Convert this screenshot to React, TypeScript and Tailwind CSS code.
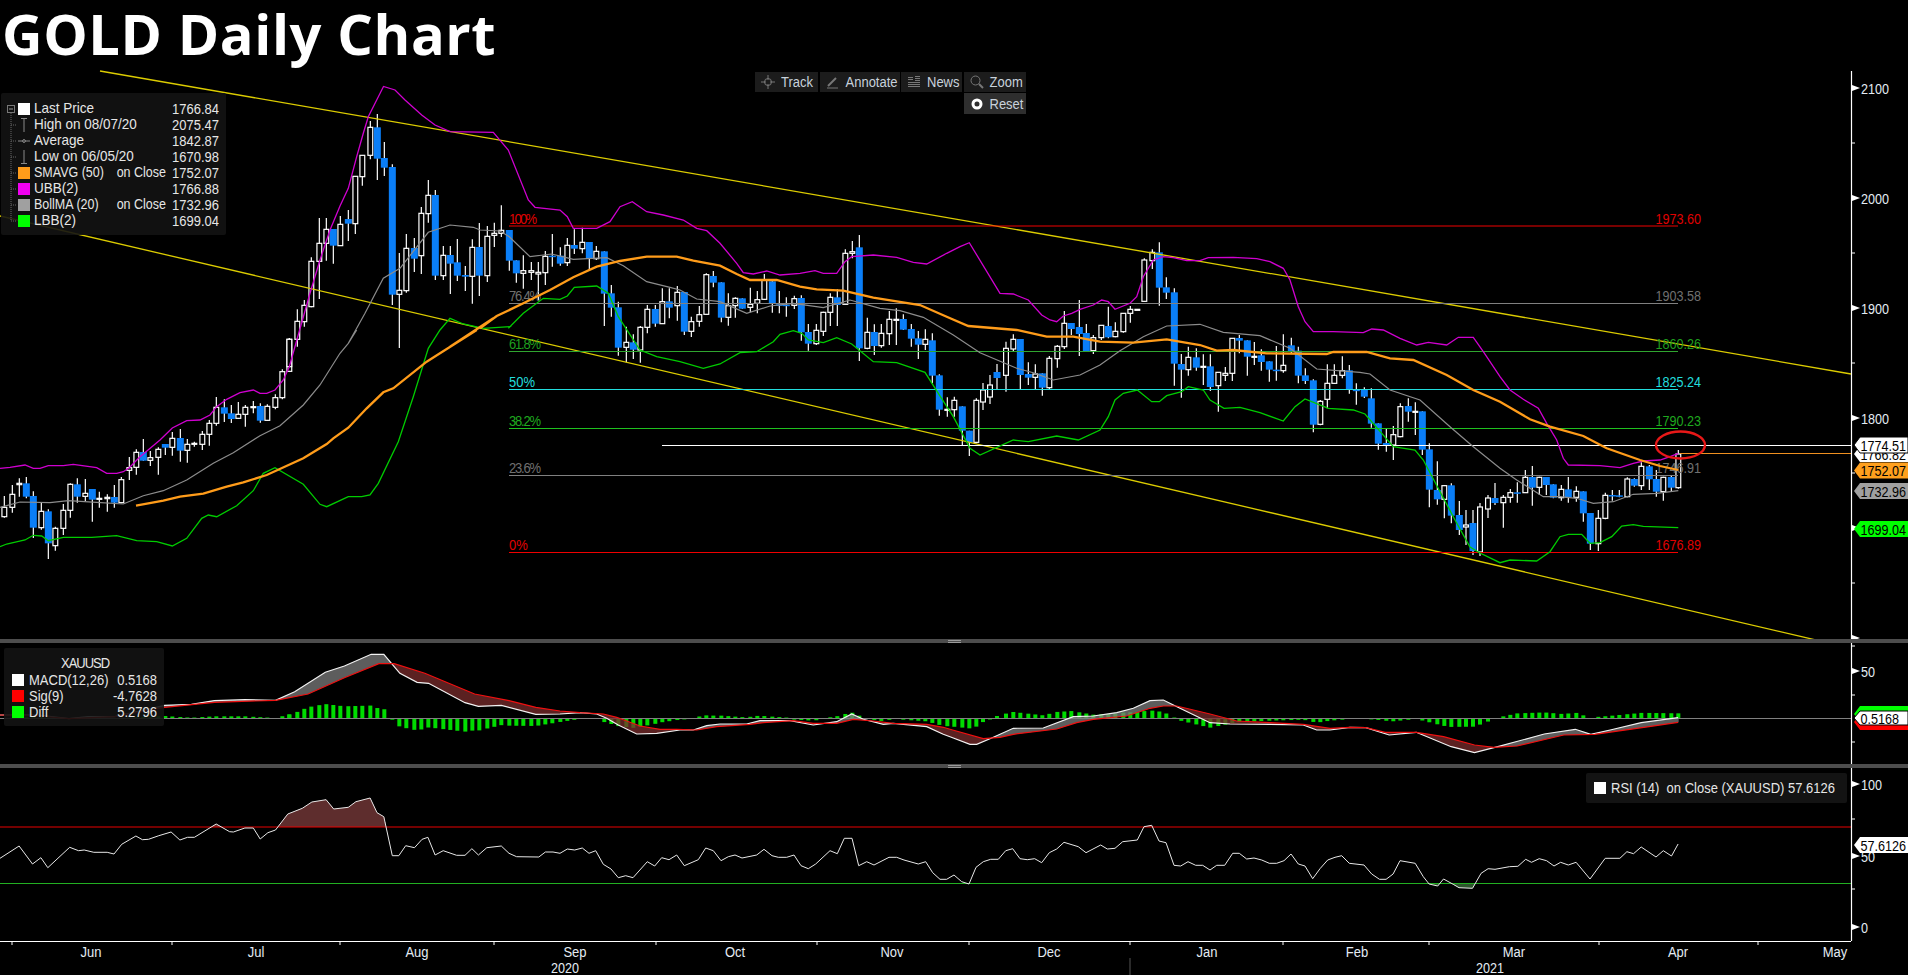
import type { ReactNode } from "react";

type Pt = [number, number];
// x, bodyTop, bodyBottom, wickTop, wickBottom, up (1) or down (0), in crop units
type Bar = [number, number, number, number, number, number];

// The price data was read off crops of the chart, so each block has its own offset and scale.
const pts = (ox: number, oy: number, list: Pt[], sx = 3, sy = 3): Pt[] =>
  list.map(([x, y]) => [ox + x / sx, oy + y / sy]);
const bars = (ox: number, oy: number, list: Bar[]): Bar[] =>
  list.map(([x, t, b, wt, wb, up]) => [ox + x / 3, oy + t / 3, oy + b / 3, oy + wt / 3, oy + wb / 3, up]);

const candles: Bar[] = [
  ...bars(0, 330, [
    [13, 532, 560, 498, 563, 1], [37, 493, 532, 465, 548, 1], [58, 460, 464, 445, 500, 1], [79, 460, 500, 441, 505, 0],
    [100, 498, 593, 484, 624, 0], [124, 544, 593, 519, 599, 1], [145, 544, 640, 538, 687, 0], [166, 595, 647, 590, 662, 1],
    [190, 541, 595, 522, 615, 1], [211, 463, 541, 460, 563, 1], [232, 463, 500, 445, 518, 0], [256, 490, 499, 447, 514, 1],
    [277, 477, 509, 477, 575, 0], [298, 505, 508, 485, 533, 1], [322, 502, 506, 493, 545, 1], [343, 501, 518, 465, 533, 0],
    [364, 449, 518, 441, 520, 1], [388, 413, 421, 381, 450, 1], [409, 367, 412, 358, 434, 1], [430, 366, 392, 327, 392, 0],
    [451, 383, 391, 363, 408, 1], [475, 358, 382, 352, 434, 1], [496, 342, 353, 342, 375, 0], [517, 325, 352, 306, 377, 1],
    [541, 324, 362, 297, 395, 0], [562, 343, 361, 327, 398, 1], [583, 340, 343, 335, 350, 1], [607, 313, 343, 303, 360, 1],
    [628, 280, 313, 270, 347, 1], [649, 232, 280, 201, 287, 1], [673, 232, 251, 208, 276, 0], [694, 250, 267, 225, 279, 0],
    [715, 253, 265, 216, 267, 1], [736, 232, 253, 225, 290, 1], [760, 230, 232, 213, 250, 1], [781, 228, 272, 220, 278, 0],
    [802, 229, 271, 223, 272, 1], [826, 203, 232, 193, 238, 1], [847, 125, 203, 118, 208, 1], [868, 28, 124, 25, 124, 1],
  ]),
  ...bars(250, 100, [
    [118, 718, 800, 714, 800, 1], [142, 664, 718, 628, 740, 1], [163, 616, 665, 600, 680, 1], [184, 484, 620, 472, 622, 1],
    [208, 430, 484, 354, 597, 1], [229, 388, 430, 354, 482, 1], [250, 387, 437, 387, 491, 0], [271, 373, 437, 348, 437, 1],
    [295, 357, 371, 330, 423, 0], [316, 229, 371, 229, 402, 1], [337, 166, 230, 166, 257, 1], [361, 82, 166, 63, 178, 1],
    [382, 82, 176, 42, 240, 0], [403, 174, 203, 126, 228, 0], [427, 201, 584, 193, 615, 0], [448, 571, 583, 459, 744, 1],
    [469, 445, 572, 402, 578, 1], [493, 444, 476, 414, 516, 0], [514, 340, 467, 321, 522, 1], [535, 286, 341, 240, 368, 1],
    [556, 285, 527, 270, 540, 0], [580, 466, 527, 438, 540, 1], [601, 465, 491, 438, 582, 0], [622, 487, 527, 417, 543, 0],
    [646, 525, 530, 498, 573, 0], [667, 442, 529, 418, 611, 1], [688, 441, 527, 369, 588, 0], [712, 409, 527, 378, 546, 1],
    [733, 400, 406, 368, 441, 1], [754, 391, 400, 316, 411, 1],
  ]),
  ...bars(480, 200, [
    [88, 90, 182, 90, 212, 0], [109, 181, 220, 181, 248, 0], [130, 212, 220, 166, 266, 1], [154, 212, 217, 186, 240, 1],
    [175, 217, 222, 186, 300, 1], [196, 169, 218, 153, 255, 1], [217, 167, 170, 102, 200, 0], [241, 167, 191, 142, 197, 0],
    [262, 136, 188, 114, 198, 1], [283, 135, 146, 88, 162, 0], [307, 127, 146, 83, 160, 1], [328, 126, 176, 126, 212, 0],
    [349, 154, 176, 138, 180, 1], [373, 154, 281, 154, 378, 0], [394, 280, 323, 255, 350, 0], [415, 322, 443, 305, 467, 0],
    [439, 427, 442, 380, 487, 1], [460, 427, 449, 403, 477, 0], [481, 382, 450, 378, 488, 1], [502, 328, 382, 315, 400, 1],
    [526, 327, 371, 315, 380, 0], [547, 305, 371, 265, 372, 1], [568, 304, 323, 265, 355, 0], [592, 277, 317, 258, 362, 1],
    [613, 276, 395, 276, 405, 0], [634, 365, 394, 350, 411, 1], [658, 344, 364, 318, 380, 1], [679, 224, 343, 220, 344, 1],
    [700, 228, 248, 213, 262, 0], [724, 247, 353, 247, 367, 0], [745, 317, 352, 280, 377, 1], [766, 295, 317, 292, 353, 1],
    [787, 295, 326, 295, 326, 0], [811, 313, 322, 263, 337, 1], [832, 299, 310, 273, 340, 1], [853, 240, 298, 222, 300, 1],
    [877, 244, 310, 238, 338, 0], [898, 313, 316, 273, 340, 0], [919, 314, 317, 292, 350, 0], [943, 296, 316, 287, 327, 1],
    [964, 294, 397, 286, 422, 0], [985, 396, 431, 372, 452, 0], [1009, 391, 431, 372, 435, 1], [1030, 337, 394, 335, 408, 1],
    [1051, 292, 337, 280, 378, 1], [1072, 292, 315, 268, 378, 0], [1096, 160, 313, 148, 313, 1], [1117, 155, 160, 123, 175, 1],
    [1138, 142, 445, 105, 483, 0], [1162, 397, 445, 353, 448, 1], [1183, 396, 438, 373, 465, 0], [1204, 400, 437, 372, 443, 1],
    [1228, 358, 401, 333, 435, 1], [1249, 358, 361, 325, 435, 1], [1270, 357, 389, 343, 390, 0], [1294, 387, 416, 372, 440, 0],
    [1315, 415, 434, 393, 477, 0], [1336, 418, 433, 388, 450, 1], [1357, 421, 527, 400, 550, 0], [1378, 526, 629, 523, 647, 0],
    [1402, 628, 630, 592, 650, 1], [1423, 601, 629, 590, 650, 1], [1447, 619, 692, 619, 735, 0], [1468, 692, 727, 692, 768, 0],
    [1489, 601, 727, 595, 730, 1],
  ]),
  [983, 390, 402, 383, 410, 1], [990, 385, 397, 375, 404, 1], [997, 372, 378, 364, 390, 0],
  ...bars(1000, 220, [
    [18, 385, 466, 365, 515, 1], [40, 358, 387, 343, 395, 1], [61, 357, 465, 357, 507, 0], [85, 462, 473, 427, 495, 0],
    [106, 462, 472, 433, 507, 1], [127, 460, 503, 460, 527, 0], [148, 415, 503, 408, 507, 1], [172, 379, 416, 375, 443, 1],
    [193, 310, 380, 273, 387, 1], [214, 309, 327, 309, 345, 0], [238, 321, 342, 240, 408, 0], [259, 339, 393, 312, 393, 0],
    [280, 353, 392, 345, 402, 1], [304, 316, 353, 316, 360, 1], [325, 318, 352, 260, 355, 0], [346, 334, 350, 307, 352, 1],
    [370, 280, 335, 280, 338, 1], [391, 268, 280, 258, 308, 1], [412, 268, 269, 268, 269, 1], [433, 120, 244, 115, 245, 1],
    [457, 97, 122, 88, 147, 1], [478, 97, 203, 67, 257, 0], [499, 202, 218, 172, 237, 0], [523, 217, 431, 205, 497, 0],
    [544, 432, 449, 402, 533, 0], [565, 412, 449, 380, 467, 1], [589, 412, 443, 385, 452, 0], [610, 439, 442, 403, 495, 1],
    [631, 439, 501, 403, 513, 0], [655, 457, 497, 457, 575, 1], [676, 460, 466, 441, 483, 1], [697, 355, 460, 355, 483, 1],
    [718, 354, 362, 345, 400, 0], [742, 361, 410, 361, 467, 0], [763, 409, 412, 366, 435, 1], [784, 406, 426, 388, 452, 0],
    [808, 424, 449, 424, 485, 0], [829, 449, 452, 378, 482, 0], [850, 436, 452, 343, 458, 1], [874, 376, 394, 353, 400, 0],
    [895, 392, 467, 380, 490, 0], [916, 466, 483, 445, 492, 0], [940, 481, 614, 478, 637, 0], [961, 544, 613, 540, 616, 1],
    [982, 490, 538, 433, 565, 1], [1003, 466, 490, 433, 492, 1], [1027, 452, 466, 409, 475, 1], [1048, 451, 507, 435, 521, 0],
    [1069, 509, 512, 490, 554, 0], [1093, 509, 530, 502, 534, 0], [1114, 535, 611, 505, 623, 0], [1135, 610, 671, 610, 689, 0],
    [1159, 669, 675, 627, 695, 0], [1180, 644, 675, 618, 720, 1], [1201, 560, 650, 550, 652, 1], [1225, 558, 575, 535, 605, 0],
    [1246, 574, 576, 547, 645, 1], [1267, 574, 689, 574, 705, 0], [1288, 688, 809, 670, 862, 0], [1312, 810, 838, 724, 854, 0],
    [1333, 797, 838, 795, 895, 1], [1354, 796, 887, 790, 910, 0], [1378, 885, 930, 843, 945, 0],
  ]),
  [1466, 525, 527, 510, 545, 1], [1473, 523, 551, 510, 555, 0], [1480, 507, 552, 503, 556, 1], [1488, 498, 509, 495, 518, 1], [1495, 498, 503, 483, 505, 0],
  ...bars(1500, 380, [
    [10, 352, 368, 345, 443, 1], [31, 338, 352, 327, 368, 1], [52, 337, 339, 307, 368, 0], [76, 292, 338, 270, 338, 1],
    [97, 291, 323, 258, 377, 0], [118, 292, 322, 290, 345, 1], [139, 291, 315, 291, 345, 0], [160, 313, 353, 313, 355, 0],
    [184, 328, 353, 315, 362, 1], [205, 328, 353, 291, 368, 0], [229, 334, 352, 319, 365, 1], [250, 334, 400, 334, 425, 0],
    [271, 399, 491, 399, 510, 0], [295, 415, 491, 390, 513, 1], [316, 346, 415, 338, 418, 1], [337, 345, 347, 330, 362, 0],
    [358, 346, 348, 330, 352, 0], [382, 297, 350, 292, 352, 1], [403, 297, 317, 295, 320, 0], [424, 259, 317, 247, 330, 1],
    [448, 259, 298, 255, 330, 0], [469, 297, 335, 270, 350, 0], [490, 292, 335, 290, 362, 1], [514, 291, 323, 288, 333, 0],
    [535, 222, 323, 210, 326, 1],
  ]),
];

const ubb: Pt[] = [
  ...pts(0, 330, [[0, 415], [30, 412], [75, 405], [100, 415], [120, 415], [145, 407], [190, 407], [220, 403], [290, 413], [320, 430], [350, 430], [370, 425], [388, 413], [420, 380], [480, 330], [517, 294], [560, 272], [600, 270], [630, 255], [650, 230], [680, 208], [720, 188], [760, 180], [780, 190], [800, 190], [825, 180], [850, 150], [868, 110]]),
  ...pts(250, 100, [[180, 580], [210, 480], [240, 390], [270, 318], [295, 265], [320, 170], [340, 100], [355, 50], [380, 0]]),
  [383.5, 86.5], [395, 90], [405, 100],
  ...pts(250, 100, [[515, 45], [555, 75], [600, 95], [730, 97], [775, 150]]),
  ...pts(480, 200, [[145, 0], [165, 22], [240, 30], [262, 50], [280, 85], [350, 85], [390, 65], [420, 20], [457, 5], [500, 35], [550, 45], [610, 60], [650, 85], [680, 92], [720, 130], [770, 190], [790, 218], [820, 222], [860, 213], [900, 225], [960, 220], [1005, 212], [1030, 220], [1070, 220], [1095, 185], [1115, 170], [1180, 165], [1250, 172], [1300, 187], [1340, 192], [1400, 160], [1440, 140], [1468, 128]]),
  ...pts(1000, 220, [[0, 220], [40, 222], [85, 240], [125, 285], [150, 300], [170, 305], [190, 288], [215, 280], [240, 268], [280, 255], [305, 240], [325, 245], [345, 268], [390, 250], [410, 230], [430, 170], [460, 120], [490, 110], [520, 113], [560, 122], [600, 122], [625, 113], [700, 112], [770, 116], [810, 125], [850, 145], [870, 180], [895, 260], [915, 305], [940, 335], [1000, 335], [1090, 338], [1115, 327], [1150, 330], [1200, 355], [1250, 375], [1285, 367], [1340, 375], [1375, 352], [1420, 352], [1450, 395], [1500, 470]]),
  ...pts(1500, 380, [[30, 30], [70, 58], [115, 85], [140, 130], [170, 180], [190, 235], [205, 255], [300, 257], [360, 263], [400, 250], [430, 243], [480, 240], [510, 230], [535, 220]]),
];

const sma: Pt[] = [
  ...pts(0, 330, [[408, 527], [490, 512], [540, 500], [610, 491], [680, 470], [730, 457], [800, 435], [910, 385], [980, 342], [1000, 325], [1045, 293], [1100, 235], [1150, 187], [1180, 175], [1280, 95], [1320, 70], [1430, 0]]),
  ...pts(250, 100, [[600, 740], [730, 655]]),
  ...pts(480, 200, [[0, 385], [50, 348], [130, 310], [210, 270], [280, 232], [350, 200], [420, 183], [500, 170], [590, 170], [640, 182], [720, 197], [770, 222], [810, 240], [890, 240], [960, 260], [1010, 268], [1090, 272], [1180, 293], [1320, 315], [1400, 350], [1465, 378]]),
  ...pts(1000, 220, [[50, 330], [140, 350], [220, 350], [300, 365], [400, 368], [500, 358], [600, 375], [650, 392], [700, 390], [800, 400], [980, 402], [1000, 396], [1100, 396], [1170, 415], [1240, 420], [1340, 465], [1420, 510], [1500, 545]]),
  ...pts(1500, 380, [[90, 118], [150, 140], [250, 168], [320, 205], [420, 240], [480, 258], [535, 270]]),
];

const bollMa: Pt[] = [
  ...pts(0, 330, [[0, 532], [60, 516], [150, 518], [205, 512], [290, 517], [370, 522], [430, 497], [490, 482], [560, 450], [640, 400], [700, 368], [780, 317], [840, 287], [910, 225], [960, 165], [1020, 70], [1045, 40], [1070, 0]]),
  ...pts(250, 100, [[295, 730], [345, 640], [400, 535], [450, 505], [535, 397], [600, 375], [670, 382], [690, 390], [750, 393]]),
  ...pts(480, 200, [[88, 110], [150, 170], [215, 162], [280, 178], [380, 173], [430, 197], [500, 245], [570, 262], [600, 270], [650, 297], [720, 305], [800, 340], [870, 318], [940, 310], [1030, 323], [1110, 300], [1200, 325], [1260, 332], [1330, 352], [1420, 405], [1500, 458]]),
  ...pts(1000, 220, [[50, 445], [100, 458], [160, 480], [240, 465], [300, 435], [360, 392], [430, 350], [500, 318], [600, 313], [670, 337], [780, 347], [870, 385], [950, 447], [1080, 457], [1110, 462], [1170, 510], [1260, 540], [1350, 620], [1420, 680], [1500, 745]]),
  ...pts(1500, 380, [[50, 300], [130, 350], [180, 350], [230, 355], [280, 370], [340, 365], [400, 343], [470, 340], [535, 332]]),
];

const lbb: Pt[] = [
  ...pts(0, 330, [[0, 650], [20, 642], [75, 630], [100, 616], [125, 618], [145, 632], [190, 622], [275, 622], [350, 617], [410, 632], [470, 635], [517, 648], [560, 625], [605, 565], [625, 555], [650, 560], [710, 527], [760, 482], [790, 430], [825, 413], [910, 463], [960, 523], [980, 530], [1045, 500], [1085, 500], [1110, 495], [1135, 460], [1195, 335], [1240, 200], [1285, 55], [1320, 0]]),
  ...pts(250, 100, [[600, 655], [640, 672], [700, 685], [780, 680]]),
  ...pts(480, 200, [[85, 385], [130, 340], [190, 295], [240, 298], [262, 288], [283, 262], [350, 258], [385, 280], [415, 350], [480, 450], [530, 470], [600, 485], [670, 505], [720, 492], [780, 458], [830, 455], [880, 425], [900, 403], [940, 392], [965, 400], [985, 420], [1030, 428], [1070, 413], [1115, 432], [1180, 485], [1250, 488], [1335, 517], [1375, 580], [1420, 650], [1470, 745], [1500, 765]]),
  ...pts(1000, 220, [[40, 660], [85, 665], [170, 648], [235, 660], [300, 630], [325, 590], [345, 540], [370, 520], [412, 510], [455, 545], [478, 545], [500, 527], [545, 515], [565, 500], [610, 510], [630, 540], [672, 565], [720, 562], [780, 578], [850, 603], [885, 560], [915, 537], [985, 565], [1060, 570], [1095, 582], [1180, 680], [1245, 690], [1270, 720], [1365, 900]]),
  [1470, 547], [1480, 553],
  ...pts(1500, 380, [[0, 548], [30, 540], [110, 543], [150, 515], [180, 470], [205, 463], [245, 463], [270, 490], [300, 488], [335, 470], [365, 438], [400, 434], [430, 439], [535, 443]]),
];

const macd: Pt[] = [
  ...pts(0, 620, [[0, 285], [100, 285], [180, 296], [230, 290], [300, 290], [430, 256], [500, 253], [560, 242], [640, 239], [720, 241], [770, 215], [850, 157], [900, 138], [970, 103], [1003, 103], [1045, 160], [1090, 187], [1120, 190], [1215, 248], [1250, 259], [1310, 256], [1400, 283]], 2.613),
  ...pts(560, 640, [[0, 222], [60, 218], [110, 222], [140, 235], [175, 255], [230, 282], [290, 280], [360, 270], [400, 270], [440, 257], [480, 252], [560, 252], [600, 242], [690, 242], [760, 255], [830, 245], [875, 222], [910, 238], [970, 253], [1000, 250], [1100, 260], [1150, 283]]),
  ...pts(950, 640, [[0, 290], [60, 313], [80, 313], [120, 296], [190, 265], [280, 264], [370, 230], [430, 228], [500, 218], [550, 205], [600, 182], [640, 180], [690, 205], [780, 248], [840, 252], [960, 253], [1060, 255], [1100, 270], [1140, 270], [1200, 262]]),
  ...pts(1300, 620, [[170, 323], [230, 345], [300, 337], [390, 380], [450, 398], [510, 380], [630, 342], [710, 328], [750, 343], [800, 330], [880, 308], [975, 293]], 2.579),
];

const signal: Pt[] = [
  ...pts(0, 620, [[0, 285], [100, 288], [180, 296], [300, 290], [430, 262], [560, 247], [720, 241], [805, 222], [900, 173], [990, 131], [1030, 131], [1110, 160], [1240, 222], [1330, 242], [1400, 262]], 2.613),
  ...pts(560, 640, [[0, 213], [60, 218], [130, 222], [170, 232], [240, 258], [300, 268], [350, 268], [410, 270], [470, 260], [570, 253], [610, 248], [700, 242], [760, 250], [830, 250], [880, 238], [940, 243], [1000, 250], [1100, 253], [1150, 262]]),
  ...pts(950, 640, [[0, 268], [100, 296], [150, 292], [190, 283], [320, 267], [380, 248], [430, 238], [530, 228], [600, 205], [640, 198], [680, 198], [780, 222], [860, 243], [960, 248], [1060, 253], [1140, 265], [1200, 262]]),
  ...pts(1300, 620, [[170, 323], [220, 337], [300, 337], [370, 350], [450, 375], [500, 382], [560, 378], [680, 345], [760, 343], [900, 320], [975, 307]], 2.579),
];

const rsi: Pt[] = [
  ...pts(0, 620, [[0, 715], [50, 678], [85, 732], [107, 713], [125, 743], [182, 682], [205, 692], [220, 690], [245, 697], [280, 697], [298, 702], [318, 673], [355, 648], [372, 659], [388, 658], [415, 647], [447, 636], [470, 660], [490, 652], [508, 652], [565, 612], [600, 635], [610, 636], [640, 624], [662, 624], [680, 657], [700, 638], [720, 630], [752, 582], [790, 565], [815, 546], [852, 539], [872, 567], [910, 562], [930, 545], [967, 534], [985, 578], [1003, 590], [1025, 707], [1042, 707], [1060, 677], [1083, 683], [1103, 658], [1118, 652], [1137, 705], [1158, 692], [1193, 706], [1215, 706], [1233, 686], [1250, 705], [1272, 683], [1310, 678], [1330, 700], [1350, 710], [1408, 711], [1425, 696], [1445, 696]], 2.613),
  ...pts(560, 640, [[0, 640], [22, 627], [44, 630], [67, 624], [87, 640], [107, 632], [130, 673], [153, 687], [175, 713], [197, 707], [219, 713], [262, 665], [284, 678], [305, 653], [327, 659], [350, 645], [373, 677], [415, 659], [437, 624], [460, 632], [483, 662], [505, 650], [525, 645], [546, 654], [590, 645], [612, 628], [636, 647], [655, 652], [680, 652], [702, 645], [723, 677], [745, 686], [767, 672], [810, 632], [832, 641], [853, 595], [876, 595], [896, 677], [920, 665], [942, 675], [987, 652], [1010, 652], [1032, 660], [1075, 672], [1097, 665], [1118, 698], [1140, 718], [1160, 718]]),
  ...pts(950, 640, [[0, 712], [12, 705], [35, 725], [57, 732], [78, 682], [100, 665], [122, 658], [145, 658], [167, 632], [188, 626], [210, 656], [232, 659], [254, 656], [275, 668], [298, 638], [320, 627], [342, 607], [385, 620], [408, 638], [452, 615], [472, 627], [495, 625], [518, 605], [562, 600], [582, 560], [605, 556], [627, 603], [648, 608], [672, 676], [692, 678], [714, 665], [737, 676], [758, 676], [780, 690], [800, 676], [824, 676], [848, 640], [868, 640], [890, 657], [912, 654], [935, 660], [958, 670], [980, 670], [1002, 662], [1023, 642], [1045, 672], [1065, 678], [1088, 716], [1110, 686], [1133, 660], [1155, 652], [1175, 647], [1198, 670]]),
  ...pts(1300, 620, [[165, 735], [185, 762], [205, 778], [222, 778], [240, 762], [258, 722], [297, 730], [318, 770], [333, 792], [355, 798], [370, 777], [395, 793], [410, 803], [445, 805], [467, 760], [485, 746], [503, 748], [540, 740], [562, 739], [582, 718], [597, 727], [617, 716], [636, 722], [655, 738], [672, 727], [692, 735], [712, 727], [748, 777], [787, 715], [825, 715], [843, 695], [860, 701], [880, 681], [918, 711], [937, 692], [958, 708], [975, 672]], 2.579),
];

const fibLevels = [
  { pct: "100%", value: "1973.60", y: 226, line: "#f00000", text: "#e00000" },
  { pct: "76.4%", value: "1903.58", y: 303.5, line: "#808080", text: "#707070" },
  { pct: "61.8%", value: "1860.26", y: 351.5, line: "#2fa52f", text: "#1f9f1f" },
  { pct: "50%", value: "1825.24", y: 389.5, line: "#22dddd", text: "#22dddd" },
  { pct: "38.2%", value: "1790.23", y: 428.5, line: "#1fc01f", text: "#1fa81f" },
  { pct: "23.6%", value: "1746.91", y: 475.5, line: "#808080", text: "#707070" },
  { pct: "0%", value: "1676.89", y: 552.5, line: "#f00000", text: "#e00000" },
];

const months: [string, number][] = [
  ["Jun", 91], ["Jul", 256], ["Aug", 417], ["Sep", 575], ["Oct", 735], ["Nov", 892],
  ["Dec", 1049], ["Jan", 1207], ["Feb", 1357], ["Mar", 1514], ["Apr", 1678], ["May", 1835],
];
const timeTicks = [12, 172, 340, 494, 656, 817, 969, 1130, 1283, 1429, 1599, 1758];

// Bloomberg's chart font is taller and narrower than anything installed
const tallSvg = "origin-center scale-y-[1.14] [transform-box:fill-box]";
const tallHtml = "inline-block scale-y-[1.12]";

const line = (list: Pt[]) => list.map(([x, y]) => `${x.toFixed(1)},${y.toFixed(1)}`).join(" ");

function at(list: Pt[], x: number) {
  if (x <= list[0][0]) return list[0][1];
  for (let i = 1; i < list.length; i++) {
    if (x <= list[i][0]) {
      const [x0, y0] = list[i - 1];
      const [x1, y1] = list[i];
      return y0 + ((y1 - y0) * (x - x0)) / (x1 - x0 || 1);
    }
  }
  return list[list.length - 1][1];
}

// one path of 1px columns between two curves, used for the shaded cloud areas
function columns(from: number, to: number, top: (x: number) => number, bottom: (x: number) => number) {
  let d = "";
  for (let x = from; x <= to; x++) {
    const a = top(x);
    const b = bottom(x);
    if (b > a) d += `M${x} ${a.toFixed(1)}V${b.toFixed(1)}`;
  }
  return d;
}

function Flag({ y, label, fill, h = 8, stroke }: { y: number; label?: string; fill: string; h?: number; stroke?: string }) {
  return (
    <g>
      <polygon points={`1854,${y} 1860,${y - h} 1908,${y - h} 1908,${y + h} 1860,${y + h}`} fill={fill} stroke={stroke} />
      {label && (
        <text x={1860.5} y={y + 5} fill="#000" fontSize={12.6} className={tallSvg}>
          {label}
        </text>
      )}
    </g>
  );
}

function Axis({ y1, y2, major, minor, labels }: { y1: number; y2: number; major: number[]; minor: number[]; labels: [string, number][] }) {
  return (
    <g>
      <line x1={1851.5} x2={1851.5} y1={y1} y2={y2} stroke="#fff" strokeWidth={1.2} />
      {major.map((y) => (
        <polygon key={y} points={`1852,${y - 3} 1860,${y} 1852,${y + 3}`} fill="#fff" />
      ))}
      {minor.map((y) => (
        <line key={y} x1={1852} x2={1855} y1={y} y2={y} stroke="#fff" />
      ))}
      {labels.map(([t, y]) => (
        <text key={t} x={1861} y={y + 5} fill="#e4ecf4" fontSize={12.6} className={tallSvg}>
          {t}
        </text>
      ))}
    </g>
  );
}

function TreeCell({ first, last }: { first?: boolean; last?: boolean }) {
  return (
    <svg width="14" height="16" viewBox="0 0 14 16" className="shrink-0">
      <line x1="7" x2="7" y1={first ? 8 : 0} y2={last ? 8 : 16} stroke="#666" strokeDasharray="1 1" />
      {first ? (
        <g>
          <rect x="3.5" y="4.5" width="7" height="7" fill="#111" stroke="#777" />
          <line x1="5" x2="9" y1="8" y2="8" stroke="#999" />
        </g>
      ) : (
        <line x1="7" x2="13" y1="8" y2="8" stroke="#666" strokeDasharray="1 1" />
      )}
    </svg>
  );
}

function Swatch({ color }: { color: string }) {
  return <span className="block h-3 w-3 shrink-0" style={{ backgroundColor: color }} />;
}

function MarkerIcon({ d }: { d: string }) {
  return (
    <svg width="12" height="16" viewBox="0 0 12 16" className="shrink-0">
      <path d={d} fill="none" stroke="#8a8a8a" />
    </svg>
  );
}

const legendRows: { marker: ReactNode; label: string; note?: string; value: string }[] = [
  { marker: <Swatch color="#ffffff" />, label: "Last Price", value: "1766.84" },
  { marker: <MarkerIcon d="M3 1.5H9M6 1.5V15" />, label: "High on 08/07/20", value: "2075.47" },
  { marker: <MarkerIcon d="M0 8H12M6 6.5a1.5 1.5 0 1 0 .01 0" />, label: "Average", value: "1842.87" },
  { marker: <MarkerIcon d="M3 14.5H9M6 14.5V1" />, label: "Low on 06/05/20", value: "1670.98" },
  { marker: <Swatch color="#ff9c1a" />, label: "SMAVG (50)", note: "on Close", value: "1752.07" },
  { marker: <Swatch color="#f000f0" />, label: "UBB(2)", value: "1766.88" },
  { marker: <Swatch color="#a0a0a0" />, label: "BollMA (20)", note: "on Close", value: "1732.96" },
  { marker: <Swatch color="#00ff00" />, label: "LBB(2)", value: "1699.04" },
];

const tools = [
  {
    label: "Track",
    width: "w-[63px]",
    icon: (
      <svg width="14" height="14" viewBox="0 0 14 14" fill="none" stroke="#777">
        <circle cx="7" cy="7" r="3.5" />
        <path d="M7 0V5M7 9V14M0 7H5M9 7H14" />
      </svg>
    ),
  },
  {
    label: "Annotate",
    width: "w-[80px]",
    icon: (
      <svg width="14" height="14" viewBox="0 0 14 14" fill="none" stroke="#777">
        <path d="M2 11L10 3" strokeWidth="2" />
        <path d="M1 13H12" />
      </svg>
    ),
  },
  {
    label: "News",
    width: "w-[61px]",
    icon: (
      <svg width="14" height="14" viewBox="0 0 14 14" fill="none" stroke="#777">
        <path d="M1 2.5H6M1 4.5H6M8 1.5H13M8 3.5H13M8 5.5H13M1 7.5H13M1 9.5H13M1 11.5H13" />
      </svg>
    ),
  },
  {
    label: "Zoom",
    width: "w-[62px]",
    icon: (
      <svg width="14" height="14" viewBox="0 0 14 14" fill="none" stroke="#777">
        <circle cx="5.5" cy="5.5" r="4.5" />
        <path d="M9 9L13 13" strokeWidth="2" />
      </svg>
    ),
  },
];

function Grip() {
  return (
    <div className="absolute left-[948px] top-[1px] flex w-[13px] flex-col gap-[1px]">
      <span className="block h-px bg-[#9a9a9a]" />
      <span className="block h-px bg-[#9a9a9a]" />
    </div>
  );
}

function MainChart() {
  const price = (p: number) => 418 - (p - 1800) * 1.1;
  return (
    <svg viewBox="0 66 1908 573" className="block h-full w-full">
      {candles.map(([x, t, b, wt, wb, up], i) => (
        <g key={i}>
          <line x1={x} x2={x} y1={wt} y2={wb} stroke="#fff" strokeWidth={1.2} />
          {up ? (
            <rect x={x - 2.4} y={t} width={4.8} height={Math.max(b - t, 1)} fill="#000" stroke="#fff" strokeWidth={1.2} />
          ) : (
            <rect x={x - 3.5} y={t} width={7} height={Math.max(b - t, 1.5)} fill="#0a7ef7" />
          )}
        </g>
      ))}
      <line x1={100} y1={71} x2={1851} y2={374} stroke="#dccc00" strokeWidth={1.3} />
      <line x1={0} y1={216} x2={1816} y2={640} stroke="#dccc00" strokeWidth={1.3} />
      {fibLevels.map((f) => (
        <g key={f.pct}>
          <line x1={509} x2={1678} y1={f.y} y2={f.y} stroke={f.line} strokeWidth={1.2} />
          <text x={509} y={f.y - 3} fill={f.text} fontSize={13} className={tallSvg} textLength={f.pct.length > 4 ? 32 : f.pct.length > 3 ? 28 : undefined}>
            {f.pct}
          </text>
          <text x={1701} y={f.y - 3} fill={f.text} fontSize={12.6} textAnchor="end" className={tallSvg}>
            {f.value}
          </text>
        </g>
      ))}
      <line x1={662} x2={1851} y1={445.5} y2={445.5} stroke="#fff" strokeWidth={1.2} />
      <line x1={1680} x2={1851} y1={453.5} y2={453.5} stroke="#f09020" strokeWidth={1} />
      <polyline points={line(bollMa)} fill="none" stroke="#8c8c8c" strokeWidth={1.2} />
      <polyline points={line(lbb)} fill="none" stroke="#00cc00" strokeWidth={1.3} />
      <polyline points={line(ubb)} fill="none" stroke="#d000d0" strokeWidth={1.3} />
      <polyline points={line(sma)} fill="none" stroke="#ff9c1a" strokeWidth={2.3} />
      <ellipse cx={1680.5} cy={445} rx={24.5} ry={13.5} fill="none" stroke="#e81818" strokeWidth={2.4} />
      <Axis
        y1={71}
        y2={639}
        major={[88, 198, 308, 418, 528, 638]}
        minor={[143, 253, 363, 473, 583]}
        labels={[["2100", price(2100)], ["2000", price(2000)], ["1900", price(1900)], ["1800", price(1800)]]}
      />
      <Flag y={454} label="1766.82" fill="#fff" />
      <Flag y={470.5} label="1752.07" fill="#ffa01e" />
      <Flag y={491} label="1732.96" fill="#a0a0a0" />
      <Flag y={529} label="1699.04" fill="#00ff00" />
      <Flag y={445} label="1774.51" fill="#fff" stroke="#000" />
    </svg>
  );
}

function MacdChart() {
  const w = (x: number) => at(macd, x);
  const s = (x: number) => at(signal, x);
  const end = macd[macd.length - 1][0];
  const histogram = candles.map((c) => c[0]).filter((x) => x < end + 1);
  return (
    <svg viewBox="0 643 1908 121" className="block h-full w-full">
      <line x1={0} x2={1851} y1={718.5} y2={718.5} stroke="#808080" />
      {histogram.map((x) => {
        const diff = s(x) - w(x);
        if (Math.abs(diff) < 0.4) return null;
        return <rect key={x} x={x - 2} width={4} y={diff > 0 ? 718 - diff : 719} height={Math.abs(diff)} fill="#00dc00" />;
      })}
      <path d={columns(0, Math.floor(end), w, s)} stroke="#7c7c7c" strokeWidth={1} fill="none" />
      <path d={columns(0, Math.floor(end), s, w)} stroke="#7b2c2c" strokeWidth={1} fill="none" />
      <polyline points={line(macd)} fill="none" stroke="#f2f2f2" strokeWidth={1.2} />
      <polyline points={line(signal)} fill="none" stroke="#f01010" strokeWidth={1.2} />
      <Axis y1={643} y2={764} major={[671]} minor={[646, 695, 742]} labels={[["50", 671]]} />
      <Flag y={714} fill="#00ff00" />
      <Flag y={722} fill="#ff0000" />
      <Flag y={718} label="0.5168" fill="#fff" h={7} stroke="#000" />
    </svg>
  );
}

function RsiChart() {
  const r = (x: number) => at(rsi, x);
  const end = Math.floor(rsi[rsi.length - 1][0]);
  return (
    <svg viewBox="0 768 1908 173" className="block h-full w-full">
      <path d={columns(0, end, r, () => 827)} stroke="#7f3d3d" fill="none" />
      <path d={columns(0, end, () => 883, r)} stroke="#3c703c" fill="none" />
      <line x1={0} x2={1851} y1={827} y2={827} stroke="#e80000" strokeWidth={1.2} />
      <line x1={0} x2={1851} y1={883.5} y2={883.5} stroke="#22b022" strokeWidth={1} />
      <polyline points={line(rsi)} fill="none" stroke="#e8e8e8" strokeWidth={1} />
      <Axis y1={768} y2={941} major={[784, 856, 927]} minor={[819, 889]} labels={[["100", 784], ["50", 856], ["0", 927]]} />
      <Flag y={845} label="57.6126" fill="#fff" />
    </svg>
  );
}

function TimeAxis() {
  return (
    <svg viewBox="0 941 1908 34" className="block h-full w-full">
      <line x1={0} x2={1851} y1={941.5} y2={941.5} stroke="#fff" strokeWidth={1.2} />
      {timeTicks.map((x) => (
        <line key={x} x1={x} x2={x} y1={942} y2={945} stroke="#fff" />
      ))}
      <line x1={1130} x2={1130} y1={958} y2={975} stroke="#555" />
      {months.map(([m, x]) => (
        <text key={m} x={x} y={956} fill="#e4ecf4" fontSize={13} textAnchor="middle" className={tallSvg}>
          {m}
        </text>
      ))}
      <text x={565} y={972} fill="#e4ecf4" fontSize={12.6} textAnchor="middle" className={tallSvg}>
        2020
      </text>
      <text x={1490} y={972} fill="#e4ecf4" fontSize={12.6} textAnchor="middle" className={tallSvg}>
        2021
      </text>
    </svg>
  );
}

export default function App() {
  return (
    <div className="flex h-[975px] w-[1908px] flex-col overflow-hidden bg-black font-['Liberation_Sans',sans-serif]">
      <header className="h-[66px] shrink-0 pl-[2px]">
        <h1 className="font-['Open_Sans',sans-serif] text-[56px] font-bold leading-[66px] tracking-[0.6px] text-white">GOLD Daily Chart</h1>
      </header>

      <section className="relative h-[573px] shrink-0">
        <MainChart />
        <div className="absolute left-[1px] top-[27px] flex h-[142px] w-[225px] flex-col rounded-[2px] bg-[#131313]/90 pl-[3px] pr-[7px] pt-2 text-[13px] text-[#e6e6e6]">
          {legendRows.map((row, i) => (
            <div key={row.label} className="flex h-4 items-center">
              <TreeCell first={i === 0} last={i === legendRows.length - 1} />
              {row.marker}
              <div className={`ml-1 flex w-[132px] justify-between whitespace-nowrap ${row.note ? "text-[12.5px]" : "text-[13.5px]"}`}>
                <span className={tallHtml}>{row.label}</span>
                {row.note && <span className={tallHtml}>{row.note}</span>}
              </div>
              <span className={`ml-auto ${tallHtml}`}>{row.value}</span>
            </div>
          ))}
        </div>
        <div className="absolute left-[755px] top-[6px] flex flex-col items-end gap-px text-[13px] text-[#c8d2dc]">
          <div className="flex gap-[1.5px]">
            {tools.map((t) => (
              <div key={t.label} className={`flex h-5 items-center bg-[#1c1c1c] ${t.width}`}>
                <span className="flex w-[26px] justify-center">{t.icon}</span>
                <span className={tallHtml}>{t.label}</span>
              </div>
            ))}
          </div>
          <div className="flex h-[21px] w-[62px] items-center bg-[#2e2e2e]">
            <span className="flex w-[26px] justify-center">
              <svg width="12" height="12" viewBox="0 0 12 12" fill="none" stroke="#fff" strokeWidth="3">
                <circle cx="6" cy="6" r="4" />
              </svg>
            </span>
            <span className={tallHtml}>Reset</span>
          </div>
        </div>
      </section>

      <div className="relative h-1 shrink-0 bg-[#4d4d4d]">
        <Grip />
      </div>

      <section className="relative h-[121px] shrink-0">
        <MacdChart />
        <div className="absolute left-1 top-[5px] flex h-[78px] w-[160px] flex-col rounded-[2px] bg-[#131313]/90 pl-2 pr-[7px] pt-2 text-[13px] text-[#e6e6e6]">
          <div className="h-4 pl-[49px] leading-4 tracking-[-1px]">
            <span className={tallHtml}>XAUUSD</span>
          </div>
          {[
            ["#ffffff", "MACD(12,26)", "0.5168"],
            ["#ff0000", "Sig(9)", "-4.7628"],
            ["#00ff00", "Diff", "5.2796"],
          ].map(([color, label, value]) => (
            <div key={label} className="flex h-4 items-center">
              <Swatch color={color} />
              <span className={`ml-[5px] ${tallHtml}`}>{label}</span>
              <span className={`ml-auto ${tallHtml}`}>{value}</span>
            </div>
          ))}
        </div>
      </section>

      <div className="relative h-1 shrink-0 bg-[#4d4d4d]">
        <Grip />
      </div>

      <section className="relative h-[173px] shrink-0">
        <RsiChart />
        <div className="absolute right-[61px] top-[5px] flex h-[30px] w-[261px] items-center gap-[5px] rounded-[2px] bg-[#131313] pl-2 text-[13px] text-[#e6e6e6]">
          <Swatch color="#ffffff" />
          <span className={`whitespace-pre ${tallHtml}`}>RSI (14)  on Close (XAUUSD) 57.6126</span>
        </div>
      </section>

      <div className="h-[34px] shrink-0">
        <TimeAxis />
      </div>
    </div>
  );
}
